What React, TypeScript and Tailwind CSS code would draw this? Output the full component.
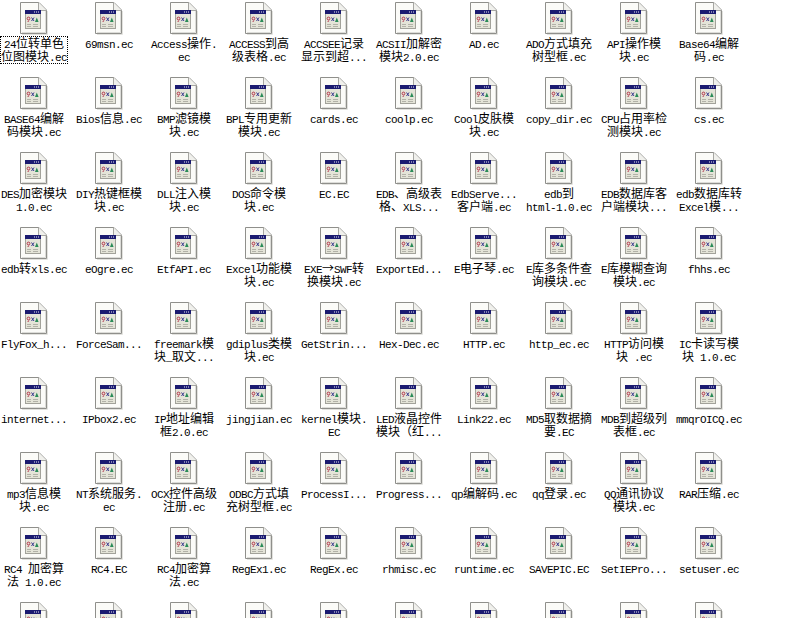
const rows: string[][] = [
  ["24位转单色|位图模块.ec", "69msn.ec", "Access操作.|ec", "ACCESS到高|级表格.ec", "ACCSEE记录|显示到超...", "ACSII加解密|模块2.0.ec", "AD.ec", "ADO方式填充|树型框.ec", "API操作模|块.ec", "Base64编解|码.ec"],
  ["BASE64编解|码模块.ec", "Bios信息.ec", "BMP滤镜模|块.ec", "BPL专用更新|模块.ec", "cards.ec", "coolp.ec", "Cool皮肤模|块.ec", "copy_dir.ec", "CPU占用率检|测模块.ec", "cs.ec"],
  ["DES加密模块|1.0.ec", "DIY热键框模|块.ec", "DLL注入模|块.ec", "DOS命令模|块.ec", "EC.EC", "EDB、高级表|格、XLS...", "EdbServe...|客户端.ec", "edb到|html-1.0.ec", "EDB数据库客|户端模块...", "edb数据库转|Excel模..."],
  ["edb转xls.ec", "eOgre.ec", "EtfAPI.ec", "Excel功能模|块.ec", "EXE→SWF转|换模块.ec", "ExportEd...", "E电子琴.ec", "E库多条件查|询模块.ec", "E库模糊查询|模块.ec", "fhhs.ec"],
  ["FlyFox_h...", "ForceSam...", "freemark模|块_取文...", "gdiplus类模|块.ec", "GetStrin...", "Hex-Dec.ec", "HTTP.ec", "http_ec.ec", "HTTP访问模|块 .ec", "IC卡读写模|块 1.0.ec"],
  ["internet...", "IPbox2.ec", "IP地址编辑|框2.0.ec", "jingjian.ec", "kernel模块.|EC", "LED液晶控件|模块（红...", "Link22.ec", "MD5取数据摘|要.EC", "MDB到超级列|表框.ec", "mmqrOICQ.ec"],
  ["mp3信息模|块.ec", "NT系统服务.|ec", "OCX控件高级|注册.ec", "ODBC方式填|充树型框.ec", "ProcessI...", "Progress...", "qp编解码.ec", "qq登录.ec", "QQ通讯协议|模块.ec", "RAR压缩.ec"],
  ["RC4 加密算|法 1.0.ec", "RC4.EC", "RC4加密算|法.ec", "RegEx1.ec", "RegEx.ec", "rhmisc.ec", "runtime.ec", "SAVEPIC.EC", "SetIEPro...", "setuser.ec"],
  ["", "", "", "", "", "", "", "", "", ""],
];

function EcIcon() {
  return (
    <svg width="28" height="33" viewBox="0 0 28 33" className="block shrink-0">
      <path d="M.5 .5H19L26.5 8V31.5H.5Z" fill="#fbfbf8" stroke="#8f8f8b" />
      <path d="M18.5 .5V8.5H26.5" fill="#f0f0ec" stroke="#a6a6a2" />
      <path d="M27.5 9V32.5H2" fill="none" stroke="#e2e2de" />
      <path d="M25.5 9V30.5H2" fill="none" stroke="#dcdcd8" />
      <rect x="5" y="8" width="16" height="19" fill="#e4e4d8" />
      <rect x="5.5" y="8.5" width="15" height="18" fill="none" stroke="#a2a29a" />
      <rect x="5" y="8" width="16" height="4" fill="#1a1a70" />
      <path d="M14 10h1M16 10h1M18 10h1" stroke="#e8e8f4" />
      <circle cx="8.5" cy="16.500" r="1.4" fill="none" stroke="#b4344a" />
      <path d="M8.800 18.500l-1 1.500" stroke="#b4344a" />
      <path d="M11.500 15.500l2.500 3.500M14 15.500l-2.500 3.500" stroke="#3a3a90" />
      <path d="M16.800 15.500l1.800 4.500h-3.600Z" fill="#2a8c58" />
      <path d="M7 22.500h4M13 22.500h5M7 24.500h4M13 24.500h5" stroke="#b2b2a8" />
    </svg>
  );
}

// latin is 6px wide per char, cjk 12px, like the old bitmap font
function Line({ text }: { text: string }) {
  const parts = text.split(/([\x00-\x7f]+)/).filter(Boolean);
  return (
    <div className="relative -top-px h-[13px] whitespace-pre text-center leading-[13px]">
      {parts.map((p, i) =>
        /^[\x00-\x7f]/.test(p) ? (
          <span key={i} className="inline-block h-[13px] font-['Liberation_Mono',monospace] text-[11px] leading-[13px] tracking-[-0.6px]">{p}</span>
        ) : (
          <span key={i} className="inline-block h-[13px] font-['Noto_Sans_CJK_SC',sans-serif] text-[12px] leading-[13px]">{p}</span>
        )
      )}
    </div>
  );
}

function FileItem({ name, selected }: { name: string; selected: boolean }) {
  return (
    <div className="flex h-[75px] w-[68px] flex-col items-center pt-[2px]">
      <EcIcon />
      <div className={selected ? "mt-[1px] w-[68px] border border-dotted border-black text-black" : "mt-[1px] w-[68px] border border-transparent text-black"}>
        {name.split("|").map((l, i) => (
          <Line key={i} text={l} />
        ))}
      </div>
    </div>
  );
}

export default function App() {
  return (
    <div className="h-[618px] w-[792px] overflow-hidden bg-white">
      <div className="grid grid-cols-[repeat(10,68px)] gap-x-[7px]">
        {rows.flat().map((name, i) => (
          <FileItem key={i} name={name} selected={i === 0} />
        ))}
      </div>
    </div>
  );
}
